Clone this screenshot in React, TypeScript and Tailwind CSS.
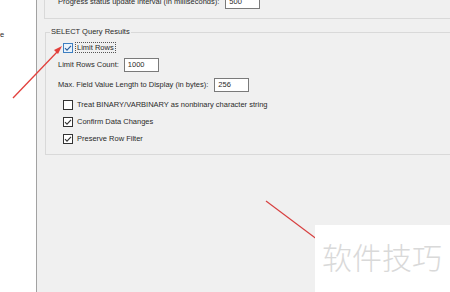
import React from "react";

const font = { fontFamily: '"Liberation Sans", Arial, sans-serif' };

function Box({ checked, focus }: { checked?: boolean; focus?: boolean }) {
  return (
    <svg width="10" height="10" viewBox="0 0 10 10" className="shrink-0">
      <rect x="0.5" y="0.5" width="9" height="9" fill={focus ? "#eaf3fb" : "#ffffff"} stroke={focus ? "#3d7fc1" : "#333333"} />
      {checked && (
        <path d="M2 5.2 L4 7.2 L8 2.8" fill="none" stroke={focus ? "#2a5f9e" : "#333333"} strokeWidth="1.1" />
      )}
    </svg>
  );
}

function Field({ value, w }: { value: string; w: string }) {
  return (
    <div className={`h-[14px] ${w} border border-[#7a7a7a] bg-white flex items-center pl-[3px] text-[7.5px] leading-none text-[#2a2a2a]`}>
      {value}
    </div>
  );
}

export default function App() {
  return (
    <div className="relative w-[450px] h-[292px] overflow-hidden flex bg-white text-[7.5px] text-[#2a2a2a]" style={font}>
      <div className="w-[36px] shrink-0 bg-white pt-[31px] text-[7.5px] leading-none">e</div>
      <div className="flex-1 bg-[#f0f0f0] border-l border-[#a2a2a2] pl-[7px] overflow-hidden">
        {/* top group (cut off) */}
        <div className="w-[520px] h-[19px] border-l border-b border-[#d9d9d9] flex items-start">
          <div className="flex items-center -mt-[5px] ml-[13px] gap-[6px]">
            <span className="whitespace-nowrap leading-none">Progress status update interval (in milliseconds):</span>
            <Field value="500" w="w-[35px]" />
          </div>
        </div>
        {/* SELECT Query Results */}
        <fieldset className="w-[520px] ml-[1px] mt-[8px] border border-[#d9d9d9] pb-[10px]">
          <legend className="ml-[4px] px-[1px] leading-[10px] whitespace-nowrap">SELECT Query Results</legend>
          <div className="flex flex-col">
            <div className="h-[11px] mt-[5px] ml-[17px] flex items-center gap-[2px]">
              <Box checked focus />
              <span className="border border-dotted border-[#555] px-[1px] leading-[9px] whitespace-nowrap">Limit Rows</span>
            </div>
            <div className="mt-[5px] ml-[12px] flex items-center gap-[5px]">
              <span className="whitespace-nowrap leading-none">Limit Rows Count:</span>
              <Field value="1000" w="w-[35px]" />
            </div>
            <div className="mt-[6px] ml-[12px] flex items-center gap-[6px]">
              <span className="whitespace-nowrap leading-none">Max. Field Value Length to Display (in bytes):</span>
              <Field value="256" w="w-[35px]" />
            </div>
            <div className="mt-[8px] ml-[17px] h-[10px] flex items-center gap-[4px]">
              <Box />
              <span className="whitespace-nowrap leading-none">Treat BINARY/VARBINARY as nonbinary character string</span>
            </div>
            <div className="mt-[7px] ml-[17px] h-[10px] flex items-center gap-[4px]">
              <Box checked />
              <span className="whitespace-nowrap leading-none">Confirm Data Changes</span>
            </div>
            <div className="mt-[7px] ml-[17px] h-[10px] flex items-center gap-[4px]">
              <Box checked />
              <span className="whitespace-nowrap leading-none">Preserve Row Filter</span>
            </div>
          </div>
        </fieldset>
      </div>

      {/* red annotation arrows */}
      <svg className="absolute inset-0 pointer-events-none" width="450" height="292" viewBox="0 0 450 292">
        <line x1="13" y1="98" x2="58" y2="51" stroke="#e2403c" strokeWidth="1.3" />
        <polygon points="62,46 54,50 58,54" fill="#e2403c" />
        <line x1="266" y1="201" x2="318" y2="240" stroke="#d84040" strokeWidth="1.2" />
      </svg>

      {/* watermark */}
      <div className="absolute left-[315px] top-[225px] w-[135px] h-[67px] bg-white flex items-start pl-[7px] pt-[14px]">
        <span
          className="text-[30px] leading-[34px] text-[#d9d9d9] whitespace-nowrap"
          style={{ fontFamily: '"Noto Sans CJK SC", "Noto Sans", sans-serif', fontWeight: 300 }}
        >
          软件技巧
        </span>
      </div>
    </div>
  );
}
